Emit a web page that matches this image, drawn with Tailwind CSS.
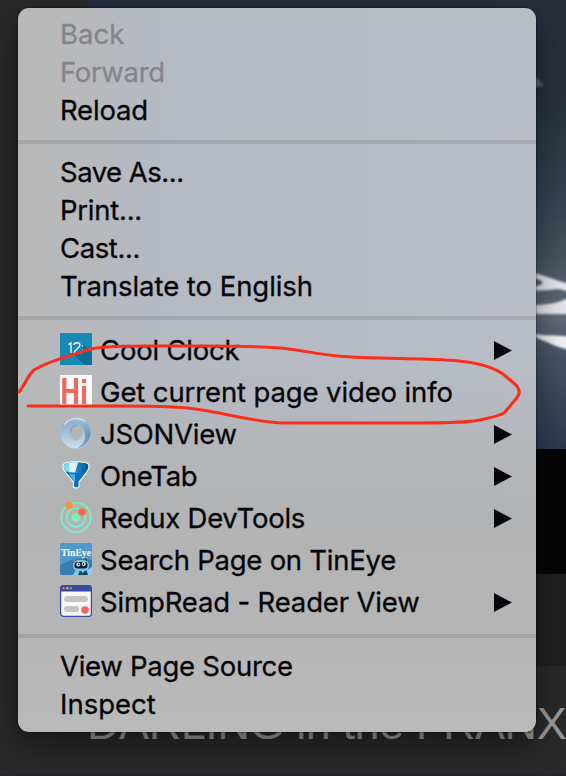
<!DOCTYPE html>
<html lang="en">
<head>
<meta charset="utf-8">
<title>Context menu</title>
<script src="https://cdn.jsdelivr.net/npm/@tailwindcss/browser@4"></script>
</head>
<body class="bg-[#292929]">
<div class="relative h-[776px] w-[566px] overflow-hidden bg-[#292929] font-['Inter',sans-serif]">
  <!-- page behind the menu -->
  <div class="absolute inset-0 flex flex-col">
    <div class="ml-[88px] h-[449px] shrink-0 overflow-hidden">
      <svg class="block" width="478" height="449" viewBox="88 0 478 449">
        <defs>
          <linearGradient id="sky" x1="0" y1="0" x2="0" y2="1">
            <stop offset="0" stop-color="#272e3d"/><stop offset=".2" stop-color="#282f3c"/><stop offset=".27" stop-color="#28353f"/><stop offset=".44" stop-color="#334352"/><stop offset=".57" stop-color="#46525f"/><stop offset=".7" stop-color="#646b7b"/><stop offset=".79" stop-color="#485466"/><stop offset="1" stop-color="#2c394d"/>
          </linearGradient>
          <filter id="soft" x="-30%" y="-30%" width="160%" height="160%"><feGaussianBlur stdDeviation="1"/></filter>
        </defs>
        <rect x="88" width="478" height="449" fill="url(#sky)"/>
        <g filter="url(#soft)">
          <path d="M534 77L538 79L544 86L534 87Z" fill="#5d636f"/>
          <path d="M530 272C545 275 553 280 570 284V293C565 291 562 288 550 290L530 291V286C546 287 547 279 530 278Z" fill="#e4e6eb"/>
          <path d="M530 305C545 305 558 304 570 297V314H530Z" fill="#e4e6eb"/>
          <path d="M530 333C546 337 555 334 570 337V350C558 348 548 342 530 335Z" fill="#f0f1f4"/>
        </g>
      </svg>
    </div>
    <div class="ml-[88px] h-[125px] shrink-0 bg-[#050505]"></div>
    <div class="ml-[88px] h-[92px] shrink-0 bg-[#202020]"></div>
    <div class="h-[109px] shrink-0 whitespace-nowrap pl-[87px] pt-[30px] font-['Liberation_Sans',sans-serif] text-[45px] leading-[56px] tracking-[-0.42px] text-[#999999]">DARLING in the FRANXX</div>
    <div class="h-px bg-[#2b2027]"></div>
  </div>

  <!-- context menu -->
  <div class="absolute left-[18px] top-[8px] flex h-[724px] w-[518px] flex-col rounded-[11px] bg-[linear-gradient(180deg,transparent_48%,#b2b3b4_68%,#b4b4b4_80%,#bababa_100%),linear-gradient(90deg,#b9b9ba_0%,#b8b9bc_14%,#b5b9c2_24%,#b7bbc3_65%,#b8bdc5_100%)] pt-[7px] text-[27.5px] leading-[38px] text-[#05060a] shadow-[0_0_2px_rgba(0,0,0,.8),0_12px_32px_rgba(0,0,0,.45)] [-webkit-text-stroke:0.3px_currentColor]">
    <div class="flex flex-col whitespace-nowrap pl-[42px]">
      <div class="text-[#83858a]"><span>Back</span></div>
      <div class="tracking-[-0.3px] text-[#83858a]"><span>Forward</span></div>
      <div class="tracking-[-0.2px]"><span>Reload</span></div>
    </div>
    <div class="mb-[9px] mt-[11px] h-1 shrink-0 bg-black/10"></div>
    <div class="flex flex-col whitespace-nowrap pl-[42px]">
      <div class="tracking-[-0.5px]"><span>Save As...</span></div>
      <div class="tracking-[-0.25px]"><span>Print...</span></div>
      <div class="tracking-[-0.4px]"><span>Cast...</span></div>
      <div class="tracking-[-0.05px]"><span>Translate to English</span></div>
    </div>
    <div class="mb-[9px] mt-[11px] h-1 shrink-0 bg-black/10"></div>
    <div class="flex flex-col whitespace-nowrap pl-[42px] pr-6">
      <div class="flex h-[42px] items-center gap-2 tracking-[-0.2px]">
        <svg class="-mt-0.5 shrink-0" width="32" height="32" viewBox="0 0 32 32"><rect width="32" height="32" fill="#1888b4"/><path d="M23 11L32 20V32H25L13 21L20 20Z" fill="#0d6f96"/><path d="M8.5 11.5L11 10V20M14 12C14 9 20 9 20 12C20 15 14 17 14 20H21" fill="none" stroke="#fff" stroke-width="1.3"/><path d="M22.5 12v1.5M22.5 16.5v1.5" stroke="#cde5ee" stroke-width="1.3"/></svg>
        <span>Cool Clock</span>
        <svg class="ml-auto" width="18" height="19" viewBox="0 0 18 19"><path d="M0 0L18 9.5L0 19Z" fill="#05060a"/></svg>
      </div>
      <div class="flex h-[42px] items-center gap-2 tracking-[-0.12px]">
        <svg class="-mt-0.5 shrink-0" width="32" height="32" viewBox="0 0 32 32"><rect width="32" height="32" fill="#fff"/><path d="M4.3 3V29M16 3V29M4.3 16H16M24 11V29M24 4V8" stroke="#ee6a5f" stroke-width="4.2" fill="none"/></svg>
        <span>Get current page video info</span>
      </div>
      <div class="flex h-[42px] items-center gap-2 tracking-[-0.25px]">
        <svg class="-mt-0.5 shrink-0" width="32" height="32" viewBox="0 0 32 32"><defs><linearGradient id="ja" x1="0" y1="0" x2="0" y2="1"><stop offset="0" stop-color="#a9c5de"/><stop offset=".55" stop-color="#7294b8"/><stop offset="1" stop-color="#89a9c9"/></linearGradient><linearGradient id="jb" x1="0" y1="0" x2="0" y2="1"><stop offset="0" stop-color="#86a9ca"/><stop offset=".5" stop-color="#a4c0da"/><stop offset="1" stop-color="#d0e1ef"/></linearGradient></defs>
          <path fill-rule="evenodd" d="M16 .5A15.500 15.500 0 1 1 16 31.500A15.500 15.500 0 1 1 16 .5ZM17 8.500C12.500 8.500 10.500 12 10.500 16C10.500 20 12.500 23.500 15.500 23.500C19.500 23.500 21.500 20 21.500 16C21.500 12 20 8.500 17 8.500Z" fill="url(#jb)"/>
          <path d="M6 6C12-1 24-1 29 8C34 18 28 30 17 31.500C25 27 27 19 24 12C21 5 12 2 6 6Z" fill="url(#ja)"/>
          <path d="M10.500 16C10.500 12 12.500 8.500 17 8.500" fill="none" stroke="#7897b6" stroke-width="1"/>
          <path d="M4.500 7.500C10 0 20 0 25 4" fill="none" stroke="#d3e3f0" stroke-width="1.300"/></svg>
        <span>JSONView</span>
        <svg class="ml-auto" width="18" height="19" viewBox="0 0 18 19"><path d="M0 0L18 9.5L0 19Z" fill="#05060a"/></svg>
      </div>
      <div class="flex h-[42px] items-center gap-2 tracking-[-0.3px]">
        <svg class="-mt-0.5 shrink-0" width="32" height="32" viewBox="0 0 32 32"><defs><linearGradient id="oa"><stop offset="0" stop-color="#4db8ec"/><stop offset=".45" stop-color="#1d8fd4"/><stop offset="1" stop-color="#04508b"/></linearGradient></defs><path d="M3 6C4 1.500 28 1.500 29 6Q29.500 9 27.500 12L19 23V28Q16 30 13.500 28V23L4.500 12Q2.500 9 3 6Z" fill="url(#oa)" stroke="#eef2f4" stroke-width="1.300"/><path d="M4 6.500Q6 3.500 13 3.300L9.500 13L5.500 12Q3.500 9 4 6.500Z" fill="#8ad4f6"/><path d="M9 4Q13 3.200 18 3.400L15 13.500L9.500 13Z" fill="#e3f5fd"/><path d="M5.500 12.500Q16 16.500 26.500 12.500L18.300 22.500V27.500H14.200V22.500Z" fill="#0d6fb8"/><path d="M9 14.500L15 15.500V24Z" fill="#46b2ea"/></svg>
        <span>OneTab</span>
        <svg class="ml-auto" width="18" height="19" viewBox="0 0 18 19"><path d="M0 0L18 9.5L0 19Z" fill="#05060a"/></svg>
      </div>
      <div class="flex h-[42px] items-center gap-2 tracking-[-0.27px]">
        <svg class="-mt-0.5 shrink-0" width="32" height="32" viewBox="0 0 32 32"><defs><linearGradient id="ra" x1="0" y1="0" x2="0" y2="1"><stop offset="0" stop-color="#7bf2a0"/><stop offset="1" stop-color="#7cf1d5"/></linearGradient></defs><g fill="none" stroke="url(#ra)" stroke-width="1.7"><circle cx="16" cy="16.5" r="14.8"/><circle cx="16" cy="16.5" r="9.3"/></g><circle cx="16" cy="16.5" r="4.5" fill="url(#ra)"/><circle cx="9" cy="4.5" r="3.6" fill="#fa8f46"/><circle cx="22" cy="11" r="3.8" fill="#fb6842"/></svg>
        <span>Redux DevTools</span>
        <svg class="ml-auto" width="18" height="19" viewBox="0 0 18 19"><path d="M0 0L18 9.5L0 19Z" fill="#05060a"/></svg>
      </div>
      <div class="flex h-[42px] items-center gap-2 tracking-[-0.25px]">
        <svg class="-mt-0.5 shrink-0 tracking-normal" width="32" height="32" viewBox="0 0 32 32"><rect width="32" height="32" rx="2" fill="#4f9acb"/><path d="M0 22L16 15L32 17V30Q32 32 30 32H2Q0 32 0 30Z" fill="#377daf"/><text x="1" y="12.5" textLength="30" lengthAdjust="spacingAndGlyphs" font-family="Liberation Serif,serif" font-weight="bold" font-size="9.5" fill="#fff">TinEye</text><path d="M16 20V17M26 18V15" stroke="#16384a" stroke-width="1.2"/><circle cx="14.5" cy="17" r="1.1" fill="#ee744e"/><circle cx="27" cy="15" r="1.1" fill="#ee744e"/><path d="M13 32L16 27H27L32 24V32Z" fill="#8bcdea"/><path d="M18 32L20 27L23 30L26 26L28 32Z" fill="#19455d"/><rect x="13" y="17" width="16" height="11" rx="5.5" fill="#7bc5e8"/><rect x="14.5" y="19" width="13" height="6.5" rx="3" fill="#102431"/><circle cx="18.3" cy="21.5" r="2" fill="#e3f4f8"/><circle cx="23.7" cy="21" r="2" fill="#e3f4f8"/><circle cx="18.7" cy="21.5" r=".9" fill="#142631"/><circle cx="23.4" cy="21" r=".9" fill="#142631"/></svg>
        <span>Search Page on TinEye</span>
      </div>
      <div class="flex h-[42px] items-center gap-2 tracking-[-0.15px]">
        <svg class="-mt-0.5 shrink-0" width="32" height="32" viewBox="0 0 32 32"><rect x=".6" y=".6" width="30.8" height="30.8" rx="3" fill="#f8f8f8" stroke="#364ba0" stroke-width="1.2"/><path d="M0 6.5V4Q0 0 4 0H28Q32 0 32 4V6.5Z" fill="#364ba0"/><circle cx="3.5" cy="3.3" r="1.2" fill="#f36d62"/><circle cx="7.2" cy="3.3" r="1.2" fill="#efb253"/><circle cx="10.9" cy="3.3" r="1.2" fill="#62ac85"/><rect x="4" y="11" width="24" height="6" rx="3" fill="#c5c5c5"/><rect x="4" y="21" width="15" height="6" rx="3" fill="#c5c5c5"/><circle cx="25" cy="25" r="3.8" fill="#fa625f"/></svg>
        <span>SimpRead - Reader View</span>
        <svg class="ml-auto" width="18" height="19" viewBox="0 0 18 19"><path d="M0 0L18 9.5L0 19Z" fill="#05060a"/></svg>
      </div>
    </div>
    <div class="mb-[9px] mt-[11px] h-1 shrink-0 bg-black/10"></div>
    <div class="flex flex-col whitespace-nowrap pl-[42px]">
      <div class="tracking-[-0.27px]"><span>View Page Source</span></div>
      <div><span>Inspect</span></div>
    </div>
  </div>

  <!-- hand-drawn highlight -->
  <svg class="pointer-events-none absolute inset-0" width="566" height="776" viewBox="0 0 566 776" fill="none" stroke="#fb2e1b" stroke-width="3" stroke-linecap="round" stroke-linejoin="round">
    <path d="M19 392C24 386 28 375 34 370C48 361 78 353 91 349C108 345 145 346 200 346C226 346 258 346 280 348C302 350 315 354 338 356C370 359 415 358 445 360C473 361 491 366 503 374L516 385C521 391 520 394 515 400L505 412C500 417 487 418 474 421C454 423 440 423 420 423H282C250 421 228 414 202 410C177 405 132 406 100 406H28"/>
  </svg>
</div>
</body>
</html>
